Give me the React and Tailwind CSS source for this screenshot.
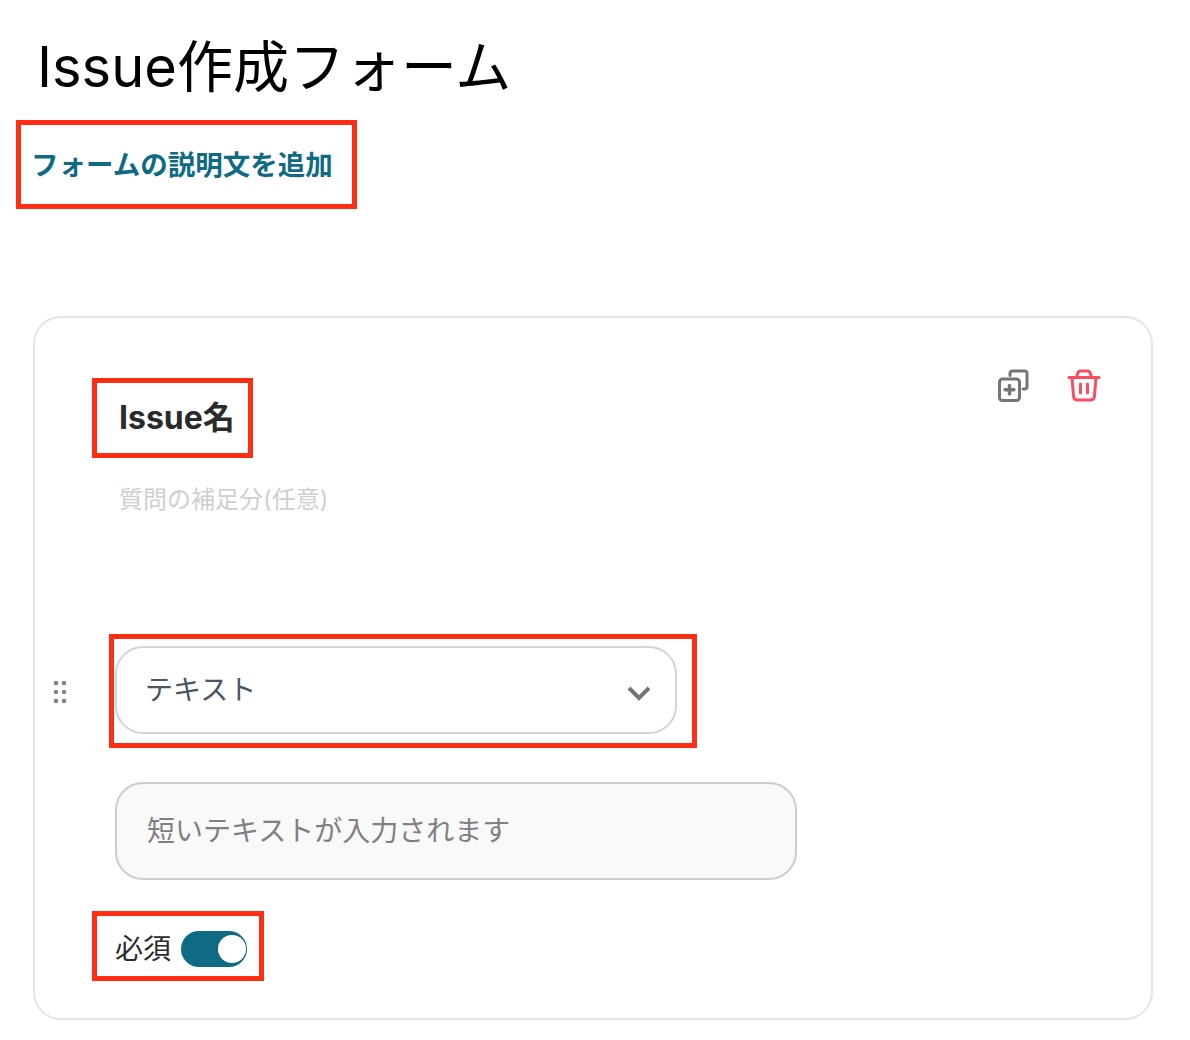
const cjk = "font-['Inter','Noto_Sans_CJK_JP',sans-serif]";

function CopyIcon() {
  return (
    <svg width="34" height="34" viewBox="0 0 34 34" fill="none" stroke="#757575" strokeWidth="3" strokeLinecap="round" strokeLinejoin="round">
      <path d="M12 6.5V4.5A2.5 2.5 0 0 1 14.5 2h12A2.5 2.5 0 0 1 29 4.5v13a2.5 2.5 0 0 1-2.5 2.5H25" />
      <rect x="1.5" y="10" width="20" height="21.5" rx="3" />
      <path d="M11.5 16.5v8.5M7 20.8h9" strokeWidth="3.4" />
    </svg>
  );
}

function TrashIcon() {
  return (
    <svg width="34" height="34" viewBox="0 0 34 34" fill="none" stroke="#fb4d5f" strokeWidth="3" strokeLinecap="round" strokeLinejoin="round">
      <path d="M2 8.5h30" />
      <path d="M9.5 8 11 3.8A2.5 2.5 0 0 1 13.4 2h7.2a2.5 2.5 0 0 1 2.4 1.8L24.5 8" />
      <path d="M5 9l1.6 18.5A4 4 0 0 0 10.6 31h12.8a4 4 0 0 0 4-3.5L29 9" />
      <path d="M13.5 15v9M20.5 15v9" />
    </svg>
  );
}

function Dots() {
  return (
    <svg width="14" height="24" viewBox="0 0 14 24" fill="#858585">
      {[3, 12, 21].map((y) => (
        <g key={y}>
          <circle cx="3" cy={y} r="2.3" />
          <circle cx="11" cy={y} r="2.3" />
        </g>
      ))}
    </svg>
  );
}

function Chevron() {
  return (
    <svg width="24" height="16" viewBox="0 0 24 16" fill="none" stroke="#757575" strokeWidth="4">
      <path d="M2 3l10 10L22 3" />
    </svg>
  );
}

export default function App() {
  return (
    <div className={`${cjk} w-[1190px] h-[1040px] bg-white overflow-hidden pt-[32px]`}>
      <h1 className="ml-[37px] text-[56px] leading-[70px] font-normal text-black">Issue作成フォーム</h1>

      <div className="mt-[18px] ml-[16px] w-[341px] h-[89px] border-[5px] border-[#ff2d14] flex items-center pl-[10px] pt-[3px]">
        <span className="text-[27.5px] font-bold text-[#0f6a84]">フォームの説明文を追加</span>
      </div>

      <div className="mt-[107px] ml-[33px] w-[1120px] h-[704px] border-2 border-[#e5e5e5] rounded-[28px] pt-[60px] relative">
        <div className="absolute top-[51px] right-[50px] flex gap-[35px]">
          <CopyIcon />
          <TrashIcon />
        </div>

        <div className="ml-[57px] w-[161px] h-[80px] border-[5px] border-[#ff2d14] flex items-center pl-[22px]">
          <span className="text-[32px] font-bold text-[#2a2a2a]">Issue名</span>
        </div>

        <p className="mt-[25px] ml-[84px] text-[24px] leading-[34px] text-[#cfcfcf]">質問の補足分(任意)</p>

        <div className="mt-[117px] ml-[18px] flex items-center">
          <div className="w-[14px] mt-[2px]">
            <Dots />
          </div>
          <div className="ml-[42px] w-[588px] h-[114px] border-[5px] border-[#ff2d14] pl-[1px] pt-[7px]">
            <div className="w-[562px] h-[88px] border-2 border-[#d1d5db] rounded-[28px] flex items-center justify-between pl-[28px] pr-[24px]">
              <span className="text-[28px] text-[#4b5563]">テキスト</span>
              <span className="mt-[6px]"><Chevron /></span>
            </div>
          </div>
        </div>

        <div className="mt-[34px] ml-[80px] w-[682px] h-[98px] bg-[#f9f9f9] border-2 border-[#cccccc] rounded-[28px] flex items-center pl-[30px]">
          <span className="text-[28px] text-[#808080]">短いテキストが入力されます</span>
        </div>

        <div className="mt-[31px] ml-[57px] w-[172px] h-[70px] border-[5px] border-[#ff2d14] flex items-center pl-[18px] pt-[6px] gap-[10px]">
          <span className="text-[28px] text-[#2a2a2a]">必須</span>
          <div className="w-[66px] h-[36px] rounded-full bg-[#0f6a84] flex items-center justify-end pr-[1px]">
            <div className="w-[28px] h-[28px] rounded-full bg-white" />
          </div>
        </div>
      </div>
    </div>
  );
}
